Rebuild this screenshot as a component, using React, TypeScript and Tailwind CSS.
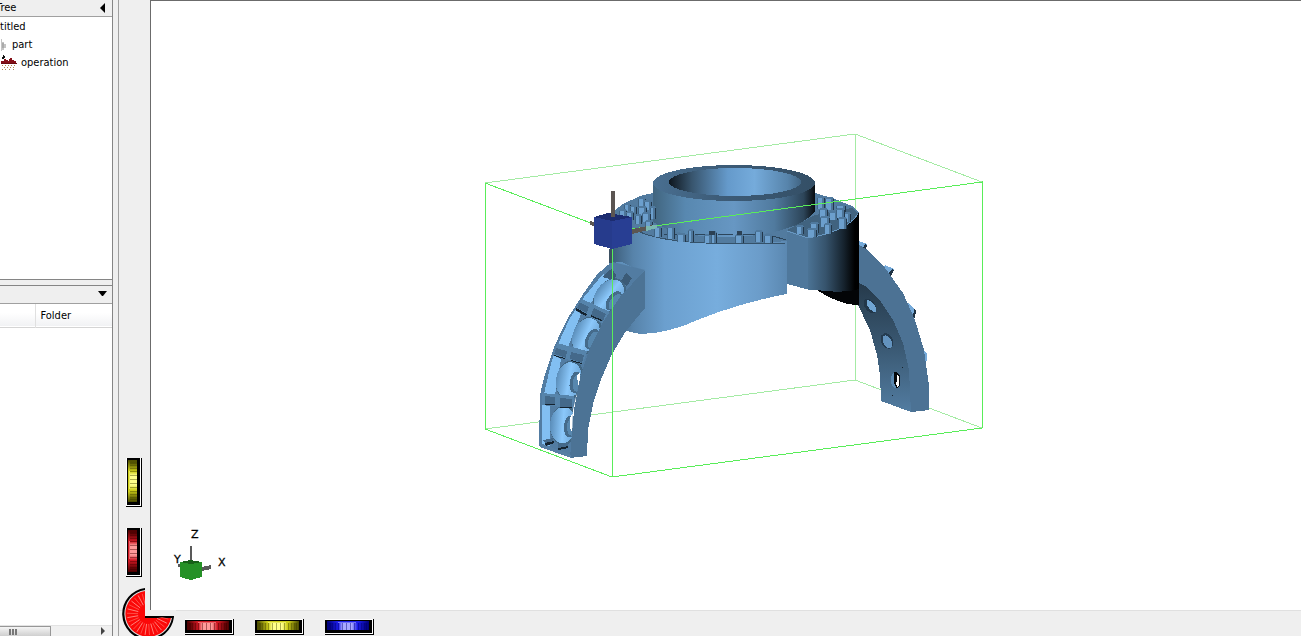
import { useState } from "react";

type Tone = "red" | "yellow" | "blue";

const TONES: Record<Tone, { dark: string; base: string; light: string }> = {
  red: { dark: "#4a0000", base: "#cc1622", light: "#ff9a9a" },
  yellow: { dark: "#4a4a00", base: "#cccc18", light: "#ffff8a" },
  blue: { dark: "#000078", base: "#1c1ce8", light: "#a8a8ff" },
};

const RIBS = [3, 5, 7, 10, 13, 17, 21, 25, 29, 33, 36, 39, 41, 43];

// Thumb wheel: the range input lies over the drawing and takes the input
function Wheel({ tone, label, vertical = false }: { tone: Tone; label: string; vertical?: boolean }) {
  const [value, setValue] = useState(50);
  const c = TONES[tone];
  const id = `wheel-${tone}-${vertical ? "v" : "h"}`;
  return (
    <label className={vertical ? "relative block h-[49px] w-4" : "relative block h-4 w-[49px]"}>
      <svg
        className="block h-full w-full"
        viewBox={vertical ? "0 0 16 49" : "0 0 49 16"}
        shapeRendering="crispEdges"
        aria-hidden="true"
      >
        <defs>
          <linearGradient id={id} x1="0" y1="0" x2="0" y2="1">
            <stop offset="0" stopColor={c.dark} />
            <stop offset="0.25" stopColor={c.base} />
            <stop offset="0.35" stopColor={c.light} />
            <stop offset="0.6" stopColor={c.light} />
            <stop offset="0.75" stopColor={c.base} />
            <stop offset="1" stopColor={c.dark} />
          </linearGradient>
          <linearGradient id={`${id}-edge`} x1="0" y1="0" x2="0" y2="1">
            <stop offset="0" stopColor={c.dark} />
            <stop offset="0.25" stopColor={c.base} />
            <stop offset="0.75" stopColor={c.base} />
            <stop offset="1" stopColor={c.dark} />
          </linearGradient>
        </defs>
        <g transform={vertical ? undefined : "matrix(0 1 1 0 0 0)"}>
          <rect width="16" height="49" fill="#000" />
          <rect width="15" height="48" fill="#fff" />
          <rect x="1" y="0" width="13" height="47" fill="#000" />
          <rect x="2" y="2" width="9" height="42" fill={`url(#${id}-edge)`} />
          <rect x="4" y="4" width="7" height="38" fill={`url(#${id})`} />
          <rect x="3" y="13" width="1" height="18" fill={c.light} opacity="0.6" />
          {RIBS.map((y) => (
            <path key={y} d={`M4 ${y}h7v1h-7z`} fill={c.dark} opacity="0.45" />
          ))}
        </g>
      </svg>
      <input
        type="range"
        aria-label={label}
        value={value}
        onChange={(e) => setValue(Number(e.target.value))}
        className="absolute inset-0 h-full w-full cursor-pointer opacity-0"
      />
    </label>
  );
}

function Dial() {
  return (
    <svg className="block h-12 w-[54px]" viewBox="121 588 54 48" aria-hidden="true">
      <path d="M144 588a26 26 0 1 0 29 29H144z" fill="#000" />
      <path d="M144 590a24 24 0 1 0 27 28H144z" fill="#ddd" />
      <path d="M144 591a23 23 0 1 0 26 27H144z" fill="#fb0808" />
      {Array.from({ length: 23 }, (_, i) => {
        const a = ((i * 12 + 2) * Math.PI) / 180;
        const x = Math.cos(a);
        const y = Math.sin(a);
        return (
          <path
            key={i}
            d={`M${147 + x * 10} ${614 + y * 10}L${147 + x * 21} ${614 + y * 21}`}
            stroke={i % 2 ? "#ff6a60" : "#ffb4ac"}
            strokeWidth="0.7"
          />
        );
      })}
      <path d="M144 588h31v28h-31z" fill="#efefef" />
      <path d="M149 588h26v22h-26z" fill="#fff" />
      <path d="M149 588h1v22h-1z" fill="#6b6b6b" />
      <path d="M144 616h29v1h-29z" fill="#000" />
    </svg>
  );
}

// Bolts of the flange: x, y of the cap, width, height
const BOLTS = [
  [638, 197, 8, 10], [644, 200, 8, 9], [624, 203, 7, 7], [650, 206, 6, 12], [630, 205, 7, 9],
  [638, 206, 9, 9], [619, 209, 8, 8], [626, 211, 8, 8], [642, 212, 9, 9], [635, 214, 7, 9],
  [645, 220, 8, 8], [654, 226, 8, 10], [667, 226, 8, 12], [677, 233, 9, 8], [688, 229, 6, 12],
  [704, 234, 8, 8], [711, 231, 6, 11], [735, 234, 9, 8], [755, 230, 8, 11], [764, 234, 9, 8],
  [817, 196, 8, 12], [825, 197, 9, 12], [836, 204, 10, 8], [819, 208, 9, 12], [829, 211, 9, 8],
  [841, 212, 10, 9], [836, 208, 9, 9], [820, 216, 10, 10], [838, 217, 9, 11],
  [796, 225, 8, 8], [810, 222, 9, 10], [807, 228, 10, 8], [824, 223, 8, 10],
];

function Bolt({ x, y, w, h }: { x: number; y: number; w: number; h: number }) {
  return (
    <g>
      <path d={`M${x} ${y + 1}h${w}v${h}h-${w}z`} fill="#6c9fcd" />
      <path d={`M${x + w - 3} ${y + 2}h2v${h - 1}h-2z`} fill="#4d7598" />
      <path d={`M${x + w - 1} ${y + 1}h1v${h}h-1z`} fill="#22374a" />
      <path d={`M${x} ${y + 1}h1v${h}h-1z`} fill="#3f6382" />
      <path d={`M${x + 1} ${y}h${w - 2}v1h1v1h-${w}v-1h1z`} fill="#4f799e" />
    </g>
  );
}

// Recess between two ribs of the left arm
function Pocket({ x, y, r }: { x: number; y: number; r: number }) {
  return (
    <g transform={`translate(${x} ${y}) rotate(${r})`}>
      <ellipse cx="2" rx="14" ry="20" fill="#426784" />
      <ellipse cx="1" rx="13" ry="18" fill="url(#pocket)" />
      <ellipse cx="8" cy="1" rx="6" ry="11" fill="#456b8b" />
      <ellipse cx="10" cy="1" rx="5" ry="9" fill="#5787ae" />
    </g>
  );
}

function Scene() {
  return (
    <svg
      className="block h-full w-full"
      viewBox="151 1 1150 609"
      preserveAspectRatio="xMinYMin slice"
      shapeRendering="crispEdges"
      role="img"
      aria-label="Part view"
    >
      <defs>
        <linearGradient id="body" gradientUnits="userSpaceOnUse" x1="612" y1="0" x2="787" y2="0">
          <stop offset="0" stopColor="#3c5d7a" />
          <stop offset="0.12" stopColor="#5783aa" />
          <stop offset="0.3" stopColor="#6b9fce" />
          <stop offset="0.6" stopColor="#77addd" />
          <stop offset="0.85" stopColor="#6b9cc9" />
          <stop offset="1" stopColor="#5b88b1" />
        </linearGradient>
        <linearGradient id="collar" gradientUnits="userSpaceOnUse" x1="653" y1="0" x2="815" y2="0">
          <stop offset="0" stopColor="#41657f" />
          <stop offset="0.2" stopColor="#5888b0" />
          <stop offset="0.5" stopColor="#6797c3" />
          <stop offset="0.75" stopColor="#507a9e" />
          <stop offset="0.93" stopColor="#2d4559" />
          <stop offset="1" stopColor="#080c10" />
        </linearGradient>
        <linearGradient id="bore" gradientUnits="userSpaceOnUse" x1="668" y1="0" x2="801" y2="0">
          <stop offset="0" stopColor="#0c131a" />
          <stop offset="0.18" stopColor="#38556e" />
          <stop offset="0.45" stopColor="#659acb" />
          <stop offset="0.65" stopColor="#75abdb" />
          <stop offset="0.9" stopColor="#5784ab" />
          <stop offset="1" stopColor="#426685" />
        </linearGradient>
        <linearGradient id="rim" x1="0" y1="0" x2="1" y2="0">
          <stop offset="0" stopColor="#496f91" />
          <stop offset="0.4" stopColor="#3d5c78" />
          <stop offset="1" stopColor="#344f66" />
        </linearGradient>
        <linearGradient id="block" gradientUnits="userSpaceOnUse" x1="808" y1="0" x2="859" y2="0">
          <stop offset="0" stopColor="#4b7395" />
          <stop offset="0.35" stopColor="#36536c" />
          <stop offset="0.7" stopColor="#16232e" />
          <stop offset="0.92" stopColor="#000" />
        </linearGradient>
        <linearGradient id="pocket" x1="0" y1="0" x2="1" y2="0">
          <stop offset="0" stopColor="#5a8db9" />
          <stop offset="0.5" stopColor="#8bc8fb" />
          <stop offset="1" stopColor="#6ba2d2" />
        </linearGradient>
        <linearGradient id="inner" x1="0" y1="0" x2="0" y2="1">
          <stop offset="0" stopColor="#263a4b" />
          <stop offset="0.5" stopColor="#3a5973" />
          <stop offset="1" stopColor="#527ca1" />
        </linearGradient>
        <clipPath id="armFace">
          <path d="M613 262L598 275 585 293 569 318 556 345 545 378 541 395 540 446 571 457 573 410 580 380 590 350 603 325 620 300 645 270z" />
        </clipPath>
      </defs>

      {/* far edges of the stock box */}
      <path
        d="M485 183L855 134 982 182M855 134V380M485 429L855 380 982 428"
        fill="none"
        stroke="#a4eba4"
      />

      {/* right arm */}
      <g>
        <path d="M859 241l8 3-2 7-7-2zM885 265l9 4-4 9-8-7zM908 303l8 7-1 8-6-2zM922 349l5 4v8h-4z" fill="#76aad9" />
        <path d="M865 244l2 1-2 7-3-2zM892 269l2 1-4 8-3-2zM914 309l2 2-1 7-2-1z" fill="#1f3243" />
        <path d="M859 245L868 250 885 268 903 293 915 320 924 350 929 385 929 410 911 412 881 401 880 375 877 355 870 330 857 303z" fill="#4c7294" />
        <path d="M859 283L867 287 881 302 893 320 903 343 909 370 911 412 881 401 880 375 877 355 870 330 857 303z" fill="url(#inner)" />
        <g transform="rotate(-38 870 306)">
          <ellipse cx="870" cy="306" rx="5" ry="8" fill="#22374a" />
          <ellipse cx="871" cy="307" rx="3" ry="7" fill="#70a5d3" />
        </g>
        <g transform="rotate(-28 887 341)">
          <ellipse cx="887" cy="341" rx="6" ry="8" fill="#253c50" />
          <ellipse cx="887" cy="342" rx="4" ry="7" fill="#6393be" />
        </g>
        <ellipse cx="895" cy="380" rx="4" ry="8" fill="#5a88b0" />
        <path d="M894 372h3l3 4v9l-3 4-3-6z" fill="#05080b" />
        <path d="M897 375l2 2v8l-2 2-1-5h1z" fill="#fff" />
        <path d="M902 367h1v1h-1zM892 395h1v1h-1z" fill="#17232e" />
      </g>

      {/* flange and body */}
      <path d="M612 222L614 211 623 204 640 196 653 193H815L835 199 852 206 859 213 850 238 787 243H650z" fill="#527b9f" />
      <path d="M611 228L618 218C630 232 661 240 690 242 720 244 755 244 787 241V294C764 298 730 307 700 319 680 328 660 334 640 334L622 330 610 300z" fill="url(#body)" />
      <path d="M787 231L808 238 810 290 787 284z" fill="#4f789c" />
      <path d="M808 237C830 234 848 226 859 213V305C846 303 832 298 818 290H808z" fill="url(#block)" />
      <path d="M817 290C830 292 846 293 859 289V305C846 306 829 298 817 290z" fill="#030507" />
      <path d="M787 230L815 215 852 208 858 214C850 227 832 234 808 238z" fill="#41637f" />
      <path d="M787 231L808 238C832 234 850 226 858 214" fill="none" stroke="#6797c1" />

      {/* collar */}
      <path d="M653 184V222C670 233 700 238 735 237 773 235 802 227 815 212V184z" fill="url(#collar)" />
      <path d="M622 222C640 236 665 240 690 242S730 244 786 243" fill="none" stroke="#35526a" />
      <path d="M664 234H682M695 234H709M718 234H733M743 234H756M773 236L786 240" fill="none" stroke="#2c455b" />
      {BOLTS.map(([x, y, w, h]) => (
        <Bolt key={`${x}-${y}`} x={x} y={y} w={w} h={h} />
      ))}
      <path d="M709 231h6v4h-6zM737 231h5v4h-5z" fill="#2b4053" />
      <ellipse cx="734" cy="183" rx="81" ry="18" fill="url(#rim)" />
      <ellipse cx="735" cy="182" rx="66" ry="14" fill="url(#bore)" />

      {/* left arm */}
      <path d="M609 263L622 262 634 268 645 270 628 300 600 310z" fill="#5f90bb" />
      <g clipPath="url(#armFace)">
        <path d="M530 250h120v220h-120z" fill="#527ca2" />
        <path d="M603 274l6 6-22 28-8-5zM574 309l7 5-13 33-10-3zM553 355l8 4-6 36-11-1zM542 404h8v42l-8-2z" fill="#82bff2" />
        <Pocket x={608} y={295} r={38} />
        <Pocket x={585} y={335} r={24} />
        <Pocket x={568} y={380} r={10} />
        <Pocket x={562} y={425} r={4} />
        <path d="M580 298l30 14-6 12-28-14zM557 343l30 8-4 13-29-9zM541 393l33 3-1 12-33-3z" fill="#5684ab" />
        <path d="M579 302l10 5-2 6-10-5zM594 308l12 6-3 7-12-6zM556 348l11 3-1 7-12-4zM571 352l13 3-2 8-12-4zM545 396l10 1v7h-10zM560 398l12 1v8h-12z" fill="#44698a" />
        <path d="M576 308l11 6-1 2-11-6zM591 315l11 5-1 1-11-5zM554 355l11 3v1l-11-3zM571 360l11 3v1l-11-3zM545 404h10v1h-10zM560 407h12v1h-12zM545 443l9-2v2l-9 3zM558 448l10-2v2l-10 2z" fill="#14222e" />
        <path d="M543 440l10-2v3l-8 2zM558 444l10-1v3l-10 2z" fill="#44698a" />
        <path d="M608 271l4-2 4 6-1 5-13-3zM626 273l6 5-5 8-6-5z" fill="#3b5b77" />
        <path d="M577 375l3-3v15l-2-2z" fill="#fff" />
        <path d="M570 418l3-5v20l-3-5z" fill="#fff" />
      </g>
      <path d="M613 262L598 275 585 293 569 318 556 345 545 378 541 395 540 446" fill="none" stroke="#527ca2" strokeWidth="2" />
      <path d="M645 270L620 297 603 322 590 348 580 378 574 410 570 458 587 456 588 430 593 404 600 382 612 354 626 331 645 308z" fill="#4c7395" />
      <path d="M540 443L571 455V458L540 447z" fill="#567fa4" />

      {/* near edges of the stock box */}
      <path
        d="M485 183V429L612 477 982 428V182L632 229M485 183L596 225M612 249V477"
        fill="none"
        stroke="#59ed59"
      />

      {/* origin marker */}
      <path d="M609 249h3v14h-3z" fill="#3d5062" />
      <path d="M590 221l6 2v4l-6-2zM632 229l20-4v4l-20 5z" fill="#5b5652" />
      <path d="M646 226l11-1v3l-11 3z" fill="#7bb8b0" />
      <path d="M594 217L608 213 632 217 612 222z" fill="#1c2c70" />
      <path d="M594 217L612 221V249L594 244z" fill="#263b8c" />
      <path d="M612 221L632 217V244L612 249z" fill="#283e93" />
      <path d="M612 249V262" stroke="#59ed59" />
      <path d="M611 191h4v26h-4z" fill="#5b5552" />

      {/* axis triad */}
      <path d="M190 546h2v16h-2zM202 567l9-2v4l-9 2zM178 564l4 1v3l-4-1z" fill="#595959" />
      <path d="M180 562L190 560 202 562V577L191 580 180 577z" fill="#259126" />
      <path d="M180 562L190 560 202 562 191 564z" fill="#176018" />
      <g fontFamily="'DejaVu Sans', sans-serif" fontSize="11" fill="#000" stroke="#000" strokeWidth="0.3">
        <text x="191" y="538">Z</text>
        <text x="174" y="563">Y</text>
        <text x="218" y="566">X</text>
      </g>
    </svg>
  );
}

function SidePanel() {
  return (
    <aside className="flex w-[113px] shrink-0 flex-col border-r border-[#858585]">
      <section className="flex h-[280px] shrink-0 flex-col border-b border-[#858585]">
        <header className="flex h-[17px] shrink-0 items-center justify-between border-b border-[#a0a0a0] pr-[7px]">
          <h2 className="-ml-1 leading-4">Tree</h2>
          <button aria-label="Collapse tree" className="block">
            <svg className="block" width="5" height="10" aria-hidden="true">
              <path d="M5 0v10L0 5z" />
            </svg>
          </button>
        </header>
        <ul className="flex-1 overflow-hidden bg-white pt-px leading-[18px]">
          <li>titled</li>
          <li className="flex items-center gap-[5px]">
            <svg className="block" width="7" height="14" shapeRendering="crispEdges" aria-hidden="true">
              <path d="M1 1h1v3h2v2h2v4h-2v2h-2v1h-1z" fill="#c4c4c4" />
              <path d="M2 5h2v5h-2z" fill="#aaa" />
            </svg>
            part
          </li>
          <li className="flex items-center gap-1">
            <svg className="block" width="17" height="16" shapeRendering="crispEdges" aria-hidden="true">
              <path d="M1 8V6h3V4h2v1h2v1h1V4h1V3h2v2h2v1h2v3H1z" fill="#861018" />
              <path d="M3 0h1v1h1v2h-1v1h-2v-2h1z" fill="#111" />
              <path d="M1 8h16v1h-16z" fill="#6a0b11" />
              <path
                d="M2 10.5h1m2 0h1m2 0h1m2 0h1m2 0h1M4 12.5h1m2 0h1m2 0h1m2 0h1M2 14.5h1m2 0h1m3 0h1m3 0h1"
                stroke="#b08a50"
              />
            </svg>
            operation
          </li>
        </ul>
      </section>

      <section className="mt-[5px] flex min-h-0 flex-1 flex-col border-t border-[#858585]">
        <header className="flex h-[18px] shrink-0 items-center justify-end border-b border-[#a0a0a0] pr-[5px] pb-[3px]">
          <button aria-label="Expand folder list" className="block">
            <svg className="block" width="9" height="5" aria-hidden="true">
              <path d="M0 0h9L5 5H4z" />
            </svg>
          </button>
        </header>
        <div className="min-h-0 flex-1 bg-white">
          <table className="w-full table-fixed border-collapse">
            <thead>
              <tr className="h-[23px] border-b border-[#d5d5d5] bg-linear-to-b from-white from-40% to-[#f1f2f4]">
                <th className="w-[35px] border-r border-[#e0e0e0]" aria-label="Name" />
                <th className="pt-[2px] pl-[5px] text-left font-normal">Folder</th>
              </tr>
            </thead>
          </table>
        </div>
        <div className="flex h-[11px] shrink-0 justify-between border-t border-[#e3e3e3] bg-[#f0f0f0] pr-[7px]">
          <div className="flex w-[51px] items-center gap-px border-t border-r border-[#979797] bg-linear-to-b from-[#f5f5f5] to-[#cfcfcf] pl-[9px]">
            <span className="h-[6px] w-[2px] bg-[#777]" />
            <span className="h-[6px] w-[2px] bg-[#777]" />
            <span className="h-[6px] w-[2px] bg-[#777]" />
          </div>
          <button aria-label="Scroll right" className="block">
            <svg className="block" width="4" height="8" aria-hidden="true">
              <path d="M0 0v8l4-4z" fill="#444" />
            </svg>
          </button>
        </div>
      </section>
    </aside>
  );
}

export default function App() {
  return (
    <div className="flex h-screen overflow-hidden bg-[#efefef] font-['DejaVu_Sans_Condensed','Liberation_Sans',sans-serif] text-[11px] text-black">
      <SidePanel />
      <main className="relative ml-[5px] flex min-w-0 flex-1 flex-col border-l border-[#a0a0a0]">
        <div className="flex min-h-0 flex-1">
          <div className="flex w-[31px] shrink-0 flex-col items-center justify-end gap-[21px] pr-px pb-[33px]">
            <Wheel tone="yellow" label="Rotate about Y" vertical />
            <Wheel tone="red" label="Rotate about X" vertical />
          </div>
          <div className="min-w-0 flex-1 border-t border-l border-[#6b6b6b] bg-white">
            <Scene />
          </div>
        </div>
        <div className="flex h-[26px] shrink-0 items-end gap-[21px] border-t border-[#e0e0e0] pb-px pl-[66px]">
          <Wheel tone="red" label="Pan horizontally" />
          <Wheel tone="yellow" label="Pan vertically" />
          <Wheel tone="blue" label="Zoom" />
        </div>
        <button aria-label="Roll view" className="absolute bottom-0 left-[3px]">
          <Dial />
        </button>
      </main>
    </div>
  );
}
